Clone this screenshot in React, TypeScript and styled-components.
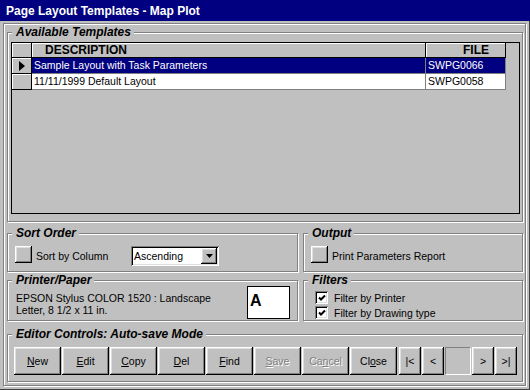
import React from 'react';
import styled, { createGlobalStyle, css } from 'styled-components';

const GlobalStyle = createGlobalStyle`
  html, body {
    margin: 0;
    padding: 0;
    background: #c0c0c0;
  }
  body {
    font-family: 'Liberation Sans', Arial, sans-serif;
    font-size: 10.5px;
    color: #000;
  }
`;

const raised = css`
  box-shadow: inset -1px -1px 0 #000, inset 1px 1px 0 #fff,
    inset -2px -2px 0 #808080, inset 2px 2px 0 #dfdfdf;
`;

const sunken = css`
  box-shadow: inset 1px 1px 0 #808080, inset -1px -1px 0 #fff,
    inset 2px 2px 0 #000, inset -2px -2px 0 #dfdfdf;
`;

const Window = styled.div`
  width: 530px;
  height: 390px;
  display: flex;
  flex-direction: column;
  background: #c0c0c0;
  box-shadow: inset -1px -1px 0 #404040;
`;

const TitleBar = styled.div`
  height: 21px;
  padding-left: 6px;
  display: flex;
  align-items: center;
  background: #000080;
  color: #fff;
  font: bold 12px 'Liberation Sans', Arial, sans-serif;
`;

const Body = styled.div`
  width: 523px;
  height: 363px;
  margin: 2px 0 0 3px;
  box-sizing: border-box;
  padding: 2px 2px 0 3px;
  border: 1px solid #808080;
  box-shadow: inset 1px 1px 0 #fff, 1px 1px 0 #fff;
  display: flex;
  flex-direction: column;
`;

const Group = styled.fieldset<{ $height: number; $width?: number }>`
  margin: 0;
  padding: 0;
  min-width: 0;
  box-sizing: border-box;
  height: ${(p) => p.$height}px;
  width: ${(p) => (p.$width ? `${p.$width}px` : 'auto')};
  border: 1px solid #808080;
  box-shadow: inset 1px 1px 0 #fff, 1px 1px 0 #fff;
`;

const Legend = styled.legend`
  margin-left: 4px;
  padding: 0 3px 0 4px;
  font: italic bold 12px/13px 'Liberation Sans', Arial, sans-serif;
  background: #c0c0c0;
`;

const GroupRow = styled.div<{ $top: number }>`
  display: flex;
  gap: 5px;
  margin-top: ${(p) => p.$top}px;
`;

/* templates grid */
const Grid = styled.div`
  margin: 3px 2px 0 3px;
  height: 172px;
  box-sizing: border-box;
  border: 1px solid #000;
  background: #c0c0c0;
`;

const GridRow = styled.div`
  display: flex;
`;

const IndicatorCell = styled.div<{ $height: number }>`
  width: 20px;
  height: ${(p) => p.$height}px;
  box-sizing: border-box;
  border-right: 1px solid #000;
  border-bottom: 1px solid #000;
  box-shadow: inset 1px 1px 0 #fff;
  display: flex;
  align-items: center;
  justify-content: center;
`;

const HeaderCell = styled.div<{ $width: number; $right?: boolean }>`
  width: ${(p) => p.$width}px;
  height: 15px;
  box-sizing: border-box;
  border-right: 1px solid #000;
  border-bottom: 1px solid #000;
  box-shadow: inset 1px 1px 0 #fff;
  font: bold 12px/14px 'Liberation Sans', Arial, sans-serif;
  text-align: ${(p) => (p.$right ? 'right' : 'left')};
  padding: ${(p) => (p.$right ? '0 16px 0 0' : '0 0 0 13px')};
`;

const Cell = styled.div<{ $width: number; $selected?: boolean }>`
  width: ${(p) => p.$width}px;
  height: 16px;
  box-sizing: border-box;
  padding-left: 2px;
  border-right: 1px solid #808080;
  border-bottom: 1px solid #808080;
  line-height: 15px;
  white-space: nowrap;
  background: ${(p) => (p.$selected ? '#000080' : '#fff')};
  color: ${(p) => (p.$selected ? '#fff' : '#000')};
`;

/* small controls */
const ControlRow = styled.div<{ $left: number }>`
  display: flex;
  align-items: center;
  height: 20px;
  margin: 6px 0 0 ${(p) => p.$left}px;
`;

const SquareButton = styled.div`
  width: 17px;
  height: 17px;
  align-self: flex-start;
  background: #c0c0c0;
  ${raised}
`;

const ControlLabel = styled.span<{ $width?: number }>`
  margin-left: 4px;
  white-space: nowrap;
  width: ${(p) => (p.$width ? `${p.$width}px` : 'auto')};
`;

const Combo = styled.div`
  width: 88px;
  height: 20px;
  box-sizing: border-box;
  padding: 2px;
  background: #fff;
  ${sunken}
  display: flex;
  align-items: center;
`;

const ComboText = styled.span`
  flex: 1;
  padding-left: 1px;
`;

const DropButton = styled.div`
  width: 16px;
  height: 16px;
  background: #c0c0c0;
  ${raised}
  display: flex;
  align-items: center;
  justify-content: center;
`;

const PaperRow = styled.div`
  display: flex;
  align-items: flex-start;
  margin-left: 8px;
`;

const PaperText = styled.div`
  width: 231px;
  padding-top: 5px;
  line-height: 12px;
`;

const PaperPreview = styled.div`
  width: 43px;
  height: 33px;
  margin-top: -1px;
  box-sizing: border-box;
  padding: 6px 0 0 2px;
  border: 1px solid #000;
  background: #fff;
  font: bold 16px/16px 'Liberation Sans', Arial, sans-serif;
`;

const FilterList = styled.div`
  display: flex;
  flex-direction: column;
  margin: 3px 0 0 11px;
`;

const FilterRow = styled.div`
  display: flex;
  align-items: center;
  gap: 6px;
  height: 15px;
`;

const CheckBox = styled.div`
  width: 13px;
  height: 13px;
  box-sizing: border-box;
  background: #fff;
  ${sunken}
  display: flex;
  align-items: center;
  justify-content: center;
`;

/* editor buttons */
const ButtonBar = styled.div`
  display: flex;
  gap: 1px;
  margin: 6px 0 0 6px;
`;

const NavGroup = styled.div`
  display: flex;
  gap: 1px;
  margin-left: 1px;
`;

const Button = styled.button<{ $width?: number }>`
  width: ${(p) => p.$width ?? 47}px;
  height: 28px;
  padding: 0;
  border: none;
  background: #c0c0c0;
  ${raised}
  font: 10.5px 'Liberation Sans', Arial, sans-serif;
  color: #000;

  &:disabled {
    color: #808080;
    text-shadow: 1px 1px 0 #fff;
  }
`;

const NavField = styled.div`
  width: 26px;
  height: 28px;
  box-sizing: border-box;
  border-top: 1px solid #808080;
  border-left: 1px solid #808080;
  border-right: 1px solid #fff;
  border-bottom: 1px solid #fff;
  background: #c0c0c0;
`;

const Key = styled.span`
  text-decoration: underline;
`;

const templates = [
  { description: 'Sample Layout with Task Parameters', file: 'SWPG0066' },
  { description: '11/11/1999 Default Layout', file: 'SWPG0058' },
];

const RowPointer = () => (
  <svg width="6" height="10" viewBox="0 0 6 10">
    <polygon points="0,0 6,5 0,10" fill="#000" />
  </svg>
);

const DownArrow = () => (
  <svg width="7" height="4" viewBox="0 0 7 4">
    <polygon points="0,0 7,0 3.5,4" fill="#000" />
  </svg>
);

const CheckMark = () => (
  <svg width="8" height="8" viewBox="0 0 8 8">
    <polyline points="1,3.5 3,5.5 7,1.5" fill="none" stroke="#000" strokeWidth="2" />
  </svg>
);

export default function App() {
  return (
    <Window>
      <GlobalStyle />
      <TitleBar>Page Layout Templates - Map Plot</TitleBar>
      <Body>
        <Group $height={196}>
          <Legend>Available Templates</Legend>
          <Grid>
            <GridRow>
              <IndicatorCell $height={15} />
              <HeaderCell $width={394}>DESCRIPTION</HeaderCell>
              <HeaderCell $width={80} $right>
                FILE
              </HeaderCell>
            </GridRow>
            {templates.map((t, i) => (
              <GridRow key={t.file}>
                <IndicatorCell $height={16}>{i === 0 && <RowPointer />}</IndicatorCell>
                <Cell $width={394} $selected={i === 0}>
                  {t.description}
                </Cell>
                <Cell $width={80} $selected={i === 0}>
                  {t.file}
                </Cell>
              </GridRow>
            ))}
          </Grid>
        </Group>

        <GroupRow $top={5}>
          <Group $height={45} $width={291}>
            <Legend>Sort Order</Legend>
            <ControlRow $left={7}>
              <SquareButton />
              <ControlLabel $width={95}>Sort by Column</ControlLabel>
              <Combo>
                <ComboText>Ascending</ComboText>
                <DropButton>
                  <DownArrow />
                </DropButton>
              </Combo>
            </ControlRow>
          </Group>
          <Group $height={45} $width={220}>
            <Legend>Output</Legend>
            <ControlRow $left={7}>
              <SquareButton />
              <ControlLabel>Print Parameters Report</ControlLabel>
            </ControlRow>
          </Group>
        </GroupRow>

        <GroupRow $top={2}>
          <Group $height={47} $width={291}>
            <Legend>Printer/Paper</Legend>
            <PaperRow>
              <PaperText>
                EPSON Stylus COLOR 1520 : Landscape
                <br />
                Letter, 8 1/2 x 11 in.
              </PaperText>
              <PaperPreview>A</PaperPreview>
            </PaperRow>
          </Group>
          <Group $height={47} $width={220}>
            <Legend>Filters</Legend>
            <FilterList>
              <FilterRow>
                <CheckBox>
                  <CheckMark />
                </CheckBox>
                Filter by Printer
              </FilterRow>
              <FilterRow>
                <CheckBox>
                  <CheckMark />
                </CheckBox>
                Filter by Drawing type
              </FilterRow>
            </FilterList>
          </Group>
        </GroupRow>

        <GroupRow $top={7}>
          <Group $height={54} $width={516}>
            <Legend>Editor Controls: Auto-save Mode</Legend>
            <ButtonBar>
              <Button>
                <Key>N</Key>ew
              </Button>
              <Button>
                <Key>E</Key>dit
              </Button>
              <Button>
                <Key>C</Key>opy
              </Button>
              <Button>
                <Key>D</Key>el
              </Button>
              <Button>
                <Key>F</Key>ind
              </Button>
              <Button disabled>
                <Key>S</Key>ave
              </Button>
              <Button disabled>
                Ca<Key>n</Key>cel
              </Button>
              <Button>
                Cl<Key>o</Key>se
              </Button>
              <NavGroup>
                <Button $width={22}>|&lt;</Button>
                <Button $width={22}>&lt;</Button>
                <NavField />
                <Button $width={22}>&gt;</Button>
                <Button $width={22}>&gt;|</Button>
              </NavGroup>
            </ButtonBar>
          </Group>
        </GroupRow>
      </Body>
    </Window>
  );
}
